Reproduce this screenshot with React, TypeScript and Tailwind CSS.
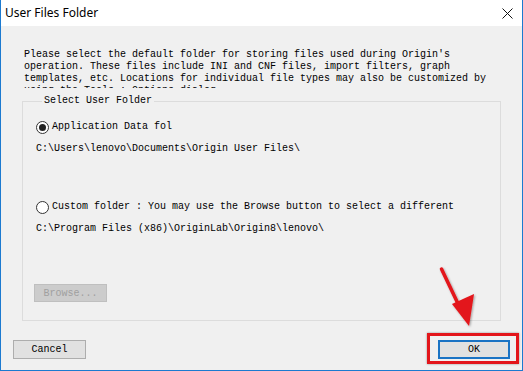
import React from 'react';

const mono = "font-['Liberation_Mono',monospace] text-[10px] leading-[12px] text-black";

function Radio({ checked }: { checked?: boolean }) {
  return (
    <span className="w-[13px] h-[13px] rounded-full border border-[#333] bg-white flex items-center justify-center shrink-0">
      {checked && <span className="w-[7px] h-[7px] rounded-full bg-[#222]" />}
    </span>
  );
}

export default function App() {
  return (
    <div className="w-[523px] h-[371px] flex flex-col border-x border-b border-[#1c7ad0] bg-white overflow-hidden">
      {/* title bar */}
      <div className="h-[26px] shrink-0 flex items-center justify-between pl-[4px] pr-[9px] bg-white">
        <span className="font-['Noto_Sans',sans-serif] text-[12px] text-black">User Files Folder</span>
        <svg width="11" height="11" viewBox="0 0 11 11">
          <path d="M0.5 0.5 L10.5 10.5 M10.5 0.5 L0.5 10.5" stroke="#111" strokeWidth="1" />
        </svg>
      </div>

      {/* body */}
      <div className="relative flex-1 bg-[#f0f0f0] flex flex-col">
        <div className={`${mono} ml-[23px] mt-[23px] h-[39px] overflow-hidden whitespace-pre`}>
          {"Please select the default folder for storing files used during Origin's\noperation. These files include INI and CNF files, import filters, graph\ntemplates, etc. Locations for individual file types may also be customized by\nusing the Tools : Options dialog."}
        </div>

        <fieldset className="ml-[21px] w-[479px] mt-[7px] border border-[#dcdcdc] px-[13px] pb-[18px]">
          <legend className={`${mono} ml-[6px] px-[2px]`}>Select User Folder</legend>
          <div className="mt-[13px] h-[14px] flex items-center gap-[3px]">
            <Radio checked />
            <span className={mono}>Application Data fol</span>
          </div>
          <div className={`${mono} mt-[9px]`}>C:\Users\lenovo\Documents\Origin User Files\</div>
          <div className="mt-[45px] h-[14px] flex items-center gap-[3px]">
            <Radio />
            <span className={mono}>Custom folder : You may use the Browse button to select a different</span>
          </div>
          <div className={`${mono} mt-[9px]`}>C:\Program Files (x86)\OriginLab\Origin8\lenovo\</div>
          <div className="mt-[49px] -ml-[2px] w-[73px] h-[18px] bg-[#cccccc] border border-[#bfbfbf] flex items-center justify-center">
            <span className="font-['Liberation_Mono',monospace] text-[10px] text-[#a0a0a0]">Browse...</span>
          </div>
        </fieldset>

        <div className="mt-[19px] px-[12px] flex justify-between">
          <div className="w-[73px] h-[19px] bg-[#e1e1e1] border border-[#adadad] flex items-center justify-center">
            <span className={mono}>Cancel</span>
          </div>
          <div className="w-[72px] h-[19px] bg-[#e1e1e1] border-2 border-[#1a73c4] flex items-center justify-center">
            <span className={mono}>OK</span>
          </div>
        </div>

        {/* red highlight box */}
        <div className="absolute left-[426px] top-[307px] w-[92px] h-[31px] border-[3px] border-[#e3151a] shadow-[0_0_2px_rgba(0,0,0,0.4)]" />
        {/* red arrow */}
        <svg className="absolute left-[430px] top-[240px]" width="50" height="70" viewBox="0 0 50 70">
          <defs>
            <filter id="sh" x="-20%" y="-20%" width="140%" height="140%">
              <feDropShadow dx="1" dy="1" stdDeviation="1" floodColor="#000" floodOpacity="0.35" />
            </filter>
          </defs>
          <g filter="url(#sh)">
            <path d="M10.5 3 L30 44" stroke="#e3151a" strokeWidth="3.5" strokeLinecap="round" />
            <path d="M21 38 L43 28 L38 60 Z" fill="#e3151a" />
          </g>
        </svg>
      </div>
    </div>
  );
}
